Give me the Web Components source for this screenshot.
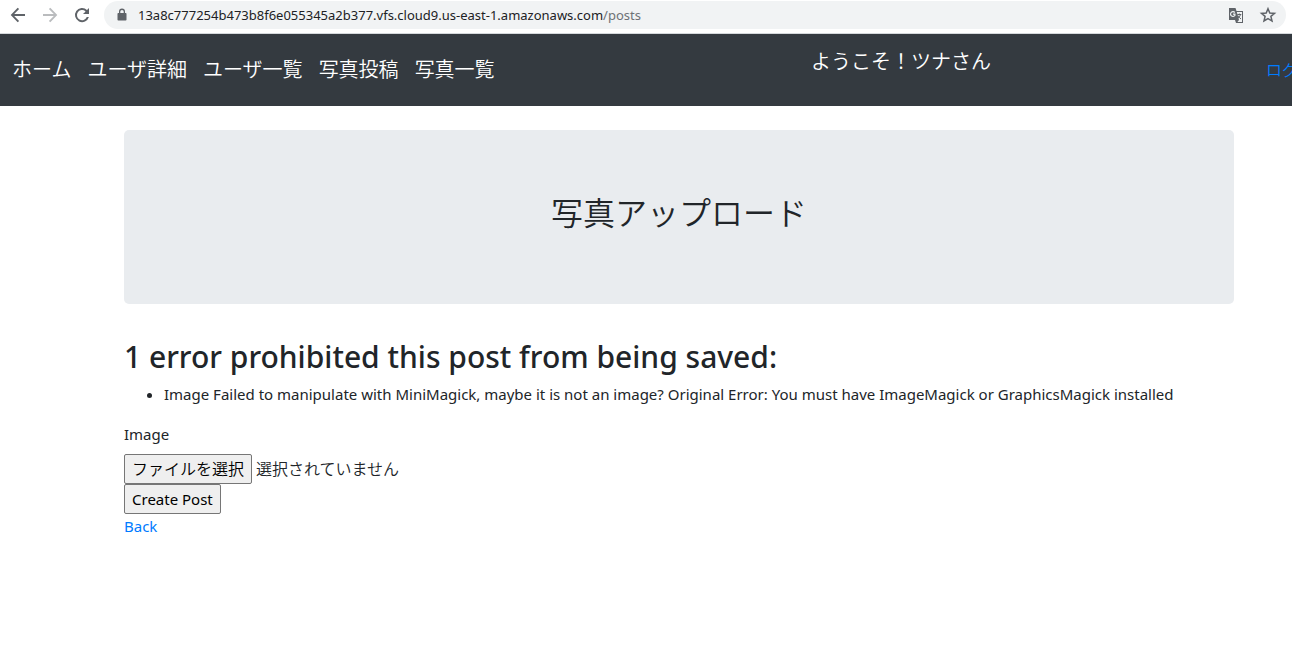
<!DOCTYPE html>
<html lang="ja">
<head>
<meta charset="utf-8">
<meta name="viewport" content="width=device-width, initial-scale=1">
<title>写真アップロード</title>
<style>
  body {
    margin: 0;
    overflow-x: hidden;
    background: #fff;
    color: #212529;
    font: 15px/24px "Noto Sans", "Noto Sans CJK JP", sans-serif;
  }
</style>
</head>
<body>
<browser-bar path="/posts">13a8c777254b473b8f6e055345a2b377.vfs.cloud9.us-east-1.amazonaws.com</browser-bar>

<site-nav>
  <nav-link href="#home">ホーム</nav-link>
  <nav-link href="#user">ユーザ詳細</nav-link>
  <nav-link href="#users">ユーザ一覧</nav-link>
  <nav-link href="#new">写真投稿</nav-link>
  <nav-link href="#posts">写真一覧</nav-link>
  <span slot="welcome">ようこそ！ツナさん</span>
  <span slot="logout">ログ</span>
</site-nav>

<page-container>
  <jumbo-tron>写真アップロード</jumbo-tron>
  <error-list>
    <span slot="heading">1 error prohibited this post from being saved:</span>
    Image Failed to manipulate with MiniMagick, maybe it is not an image? Original Error: You must have ImageMagick or GraphicsMagick installed
  </error-list>
  <post-form></post-form>
</page-container>

<script>
/**
 * Attach an open shadow root holding the given markup.
 * @param {HTMLElement} host
 * @param {string} html
 */
function render(host, html) {
  const template = document.createElement('template');
  template.innerHTML = html;

  const shadow = host.attachShadow({ mode: 'open' });
  shadow.append(template.content.cloneNode(true));
  return shadow;
}

class BrowserBar extends HTMLElement {
  constructor() {
    super();

    const shadow = render(this, `
      <style>
        :host {
          display: flex;
          align-items: center;
          gap: 8px;
          height: 28px;
          padding: 1px 6px 4px;
          border-bottom: 1px solid #d5d9dc;
          color: #202124;
          font-size: 13px;
          line-height: 28px;
        }
        button {
          display: flex;
          padding: 0;
          border: 0;
          background: none;
          color: #5f6368;
        }
        button:disabled { color: #babcbe; }
        svg { display: block; fill: currentColor; }
        .address {
          display: flex;
          flex: 1;
          align-items: center;
          min-width: 0;
          margin-left: 2px;
          padding: 0 8px 0 10px;
          border-radius: 14px;
          background: #f1f3f4;
        }
        .lock { margin-right: 8px; color: #5f6368; }
        .url { flex: 1; white-space: nowrap; }
        .path { color: #6e7276; }
        .actions { display: flex; gap: 12px; }
      </style>
      <button aria-label="Back"><svg width="24" height="24" viewBox="0 0 24 24"><path d="M19 11H8.2l4.9-4.9L11.7 4.700 4.700 12l7 7.300 1.400-1.400L8.200 13H19z"/></svg></button>
      <button aria-label="Forward" disabled><svg width="24" height="24" viewBox="0 0 24 24"><path d="M5 11h10.800l-4.900-4.900 1.400-1.400 7 7.300-7 7.300-1.400-1.400 4.900-4.900H5z"/></svg></button>
      <button aria-label="Reload"><svg width="24" height="24" viewBox="0 0 24 24"><path d="M17 6.900A7.100 7.100 0 1 0 18.900 14h-2.100a5.100 5.100 0 1 1-1.200-5.600L13 11h6V5z"/></svg></button>
      <div class="address">
        <svg class="lock" width="16" height="16" viewBox="0 0 16 16"><path fill-rule="evenodd" d="M11.700 6H11V4.600a3 3 0 0 0-6 0V6h-.700a.8.800 0 0 0-.8.800v5.900a.8.800 0 0 0 .8.800h7.400a.8.800 0 0 0 .8-.8V6.800a.8.800 0 0 0-.8-.8zM6.300 6V4.600a1.700 1.700 0 0 1 3.400 0V6z"/></svg>
        <span class="url"><slot></slot><span class="path"></span></span>
        <span class="actions">
          <button aria-label="Translate"><svg width="20" height="20" viewBox="0 0 20 20">
            <path d="M3 3h6.500l1 3H17v12h-7l-1-3H3z"/>
            <path fill="#f1f3f4" d="M10.800 7H16v10h-4.600l1.600-2z"/>
            <path fill="none" stroke="#f1f3f4" stroke-width="1.200" d="M8.800 7.500a2.400 2.400 0 1 0 .1 3V9.200H7"/>
            <path fill="none" stroke="currentColor" d="M11.300 9.500h4M13.300 8.500v1M14.500 9.500q-.5 2.500-3 4M12 10.500q1 2 3 3.500"/>
          </svg></button>
          <button aria-label="Bookmark"><svg width="20" height="20" viewBox="0 0 20 20"><path fill="none" stroke="currentColor" stroke-width="1.500" d="M10 3.700l1.800 4.300 4.700.4-3.600 3 1.100 4.600L10 13.600 6 16l1.100-4.600-3.600-3 4.700-.4z"/></svg></button>
        </span>
      </div>
    `);

    shadow.querySelector('.path').textContent = this.getAttribute('path');
  }
}

class NavLink extends HTMLElement {
  constructor() {
    super();

    const shadow = render(this, `
      <style>
        :host { display: block; }
        a { color: #fff; text-decoration: none; white-space: nowrap; }
      </style>
      <a><slot></slot></a>
    `);

    shadow.querySelector('a').href = this.getAttribute('href');
  }
}

class SiteNav extends HTMLElement {
  constructor() {
    super();

    render(this, `
      <style>
        :host {
          display: block;
          overflow: hidden;
          background: #343a40;
          color: #fff;
          font-size: 20px;
          font-weight: 350;
          line-height: 32px;
        }
        nav {
          display: grid;
          grid-template-columns: 799px 1fr 26px;
          align-items: center;
          height: 72px;
          padding-left: 12px;
        }
        .links { display: flex; gap: 16px; }
        p { margin: 0 0 16px; white-space: nowrap; }
        .logout {
          color: #007bff;
          font-size: 16px;
          text-decoration: none;
          white-space: nowrap;
        }
      </style>
      <nav>
        <div class="links"><slot></slot></div>
        <p><slot name="welcome"></slot></p>
        <a class="logout" href="#logout"><slot name="logout"></slot></a>
      </nav>
    `);
  }
}

class PageContainer extends HTMLElement {
  constructor() {
    super();

    render(this, `
      <style>
        :host { display: block; padding: 24px 58px 24px 124px; }
      </style>
      <slot></slot>
    `);
  }
}

class JumboTron extends HTMLElement {
  constructor() {
    super();

    render(this, `
      <style>
        :host {
          display: block;
          margin-bottom: 32px;
          padding: 64px 32px;
          border-radius: 5px;
          background: #e9ecef;
          text-align: center;
        }
        h1 {
          margin: 0 0 8px;
          font-size: 32px;
          font-weight: 350;
          line-height: 38px;
        }
      </style>
      <h1><slot></slot></h1>
    `);
  }
}

class ErrorList extends HTMLElement {
  constructor() {
    super();

    render(this, `
      <style>
        :host { display: block; }
        h2 {
          margin: 0 0 4px;
          font-size: 30px;
          font-weight: 500;
          line-height: 42px;
        }
        ul { margin: 0 0 16px; padding-left: 40px; }
      </style>
      <h2><slot name="heading"></slot></h2>
      <ul><li><slot></slot></li></ul>
    `);
  }
}

class PostForm extends HTMLElement {
  constructor() {
    super();

    const shadow = render(this, `
      <style>
        :host { display: block; }
        form { display: flex; flex-direction: column; align-items: flex-start; }
        label { margin-bottom: 8px; }
        .file {
          display: flex;
          align-items: center;
          gap: 4px;
          font-size: 16px;
          font-weight: 350;
        }
        button {
          height: 30px;
          padding: 0 7px;
          border: 1px solid #767676;
          border-radius: 2px;
          background: #efefef;
          color: #000;
          font: inherit;
        }
        a { color: #007bff; text-decoration: none; }
      </style>
      <form>
        <label for="choose">Image</label>
        <div class="file">
          <input id="image" type="file" accept="image/*" hidden>
          <button id="choose" type="button">ファイルを選択</button>
          <span id="name">選択されていません</span>
        </div>
        <button type="submit">Create Post</button>
        <a href="#back">Back</a>
      </form>
    `);

    const input = shadow.querySelector('#image');
    const name = shadow.querySelector('#name');

    shadow.querySelector('#choose').addEventListener('click', () => input.click());
    input.addEventListener('change', () => {
      name.textContent = input.files.length ? input.files[0].name : '選択されていません';
    });
    shadow.querySelector('form').addEventListener('submit', (e) => e.preventDefault());
  }
}

customElements.define('browser-bar', BrowserBar);
customElements.define('nav-link', NavLink);
customElements.define('site-nav', SiteNav);
customElements.define('page-container', PageContainer);
customElements.define('jumbo-tron', JumboTron);
customElements.define('error-list', ErrorList);
customElements.define('post-form', PostForm);
</script>
</body>
</html>
